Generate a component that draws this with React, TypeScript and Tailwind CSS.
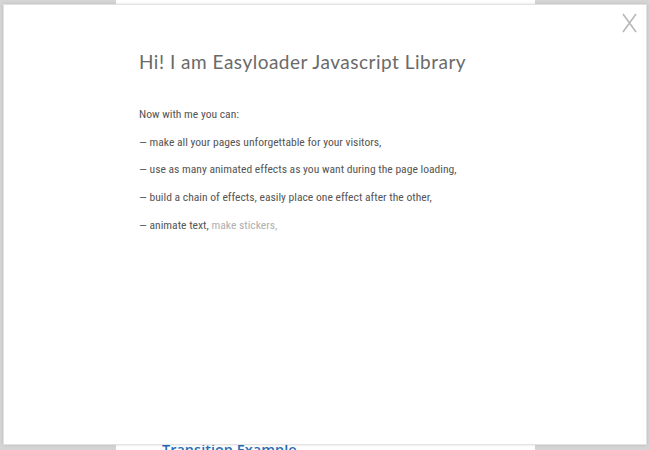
const lines = [
  "— make all your pages unforgettable for your visitors,",
  "— use as many animated effects as you want during the page loading,",
  "— build a chain of effects, easily place one effect after the other,",
];

export default function App() {
  return (
    <div className="relative h-[450px] w-[650px] overflow-hidden bg-[#d5d5d5]">
      <div className="ml-[116px] flex h-full w-[419px] flex-col justify-end bg-white">
        <div className="pl-[46px] font-['Open_Sans',sans-serif] text-[14.5px] font-semibold leading-[15px] text-[#2a6db5] translate-y-[7px]">
          Transition Example
        </div>
      </div>

      <div className="absolute left-[3px] top-[4px] h-[441px] w-[644px] border border-[#e2e2e2] bg-white shadow-[0_0_3px_rgba(0,0,0,0.12)]">
        <button className="absolute right-[9px] top-[8px] p-0">
          <svg width="15" height="20" viewBox="0 0 15 20" fill="none" stroke="#b8b8b8" strokeWidth="1.6">
            <path d="M1 1 L14 19 M14 1 L1 19" />
          </svg>
        </button>

        <div className="pl-[135px] pt-[43px]">
          <h1 className="font-['Lato',sans-serif] text-[19px] font-normal leading-[28px] tracking-[0.5px] text-[#6a6a6a]">
            Hi! I am Easyloader Javascript Library
          </h1>

          <div className="mt-[30px] flex flex-col gap-[11.7px] font-['Liberation_Sans_Narrow','Roboto_Condensed',sans-serif] text-[11.6px] leading-[16px] text-[#555555]">
            <p>Now with me you can:</p>
            {lines.map((l) => (
              <p key={l}>{l}</p>
            ))}
            <p>
              — animate text, <span className="text-[#b0b0b0]">make stickers,</span>
            </p>
          </div>
        </div>
      </div>
    </div>
  );
}
